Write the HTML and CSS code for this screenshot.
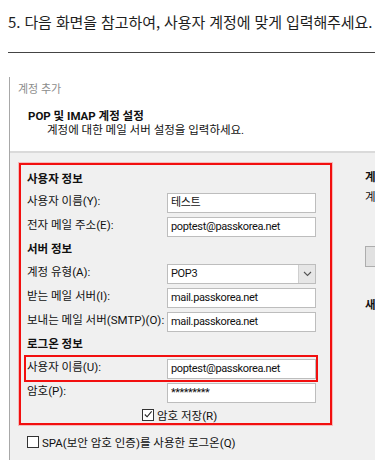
FILE: index.html
```html
<!DOCTYPE html>
<html lang="ko">
<head>
  <meta charset="UTF-8">
  <meta name="viewport" content="width=device-width, initial-scale=1.0">
  <title>POP 및 IMAP 계정 설정</title>
  <link rel="stylesheet" href="styles.css">
</head>
<body>
  <h1 class="question">5. 다음 화면을 참고하여, 사용자 계정에 맞게 입력해주세요.</h1>
  <hr class="rule">

  <div class="dialog">
    <div class="dlg-head">
      <div class="dlg-title">계정 추가</div>
      <div class="dlg-heading">POP 및 IMAP 계정 설정</div>
      <div class="dlg-sub">계정에 대한 메일 서버 설정을 입력하세요.</div>
    </div>

    <div class="dlg-body">
      <div class="left">
        <div class="redbox">
          <div class="sec first">사용자 정보</div>
          <div class="row">
            <span class="lbl">사용자 이름(Y):</span>
            <div class="field">테스트</div>
          </div>
          <div class="row">
            <span class="lbl">전자 메일 주소(E):</span>
            <div class="field">poptest@passkorea.net</div>
          </div>

          <div class="sec">서버 정보</div>
          <div class="row after-sec">
            <span class="lbl">계정 유형(A):</span>
            <div class="field select">
              <span>POP3</span>
              <span class="drop">
                <svg width="9" height="6" viewBox="0 0 9 6"><path d="M1 1l3.5 3.5L8 1" fill="none" stroke="#555" stroke-width="1.1"/></svg>
              </span>
            </div>
          </div>
          <div class="row">
            <span class="lbl">받는 메일 서버(I):</span>
            <div class="field">mail.passkorea.net</div>
          </div>
          <div class="row">
            <span class="lbl">보내는 메일 서버(SMTP)(O):</span>
            <div class="field">mail.passkorea.net</div>
          </div>

          <div class="sec">로그온 정보</div>
          <div class="highlight">
            <div class="row no-gap">
              <span class="lbl">사용자 이름(U):</span>
              <div class="field">poptest@passkorea.net</div>
            </div>
          </div>
          <div class="row pw">
            <span class="lbl">암호(P):</span>
            <div class="field stars">*********</div>
          </div>
          <label class="check save">
            <span class="box">
              <svg width="11" height="11" viewBox="0 0 11 11"><path d="M2 5.5l2.5 2.5L9.5 2" fill="none" stroke="#222" stroke-width="1.2"/></svg>
            </span>
            암호 저장(R)
          </label>
        </div>

        <label class="check spa">
          <span class="box"></span>
          SPA(보안 암호 인증)를 사용한 로그온(Q)
        </label>
      </div>

      <div class="right">
        <div class="r-title">계정 설정 테스트</div>
        <div class="r-text">계정 설정을 테스트하려면 아래 단추를 클릭하세요.</div>
        <div class="r-btn">계정 설정 테스트(T) ...</div>
        <div class="r-title r-next">새 메일 배달 위치:</div>
      </div>
    </div>
  </div>
</body>
</html>
```

FILE: styles.css
```css
html, body {
  overflow: hidden;
}
body {
  margin: 0;
  width: 375px;
  height: 460px;
  background: #fff;
  font-family: 'Noto Sans CJK KR', 'Noto Sans', sans-serif;
  color: #222;
}
.question {
  margin: 12px 0 0 8px;
  font-size: 15px;
  font-weight: 400;
  line-height: 20px;
  letter-spacing: -0.1px;
  white-space: nowrap;
  color: #1e1e1e;
}
.rule {
  margin: 20px 0 0 8px;
  border: none;
  border-top: 1px solid #444;
}

/* dialog screenshot */
.dialog {
  margin: 24px 0 0 9px;
  width: 500px;
  border-left: 1px solid #a8a8a8;
  font-family: Roboto, 'Noto Sans CJK KR', sans-serif;
  font-size: 11.5px;
  color: #111;
}
.dlg-head {
  padding: 5px 0 14px 8px;
  background: #fff;
  border-bottom: 2px solid #dadada;
}
.dlg-title {
  line-height: 16px;
  color: #8c8c8c;
  font-size: 11px;
}
.dlg-heading {
  margin: 12px 0 0 10px;
  font-weight: 700;
  line-height: 13px;
}
.dlg-sub {
  margin: 1px 0 0 29px;
  line-height: 13px;
}
.dlg-body {
  display: flex;
  align-items: flex-start;
  background: #f0f0f0;
  padding: 10px 0 20px 9px;
}
.left {
  width: 313px;
}
.redbox {
  border: 2px solid #f20f0f;
  box-shadow: 0 0 0 1px rgba(255, 90, 90, 0.35);
  padding: 0 14px 0 6px;
}
.sec {
  margin-top: 2px;
  height: 20px;
  line-height: 20px;
  font-weight: 700;
}
.sec.first {
  margin-top: 4px;
}
.row {
  display: grid;
  grid-template-columns: 140px 149px;
  margin-top: 4px;
  height: 20px;
}
.row.after-sec {
  margin-top: 5px;
}
.row.no-gap {
  margin-top: 0;
}
.row.pw {
  margin-top: 1px;
}
.lbl {
  line-height: 16px;
  white-space: nowrap;
}
.field {
  box-sizing: border-box;
  height: 20px;
  background: #fff;
  border: 1px solid #bdbdbd;
  padding: 0 3px;
  line-height: 18px;
  font-size: 11px;
  letter-spacing: -0.35px;
  white-space: nowrap;
  overflow: hidden;
}
.field.stars {
  letter-spacing: -0.5px;
}
.select {
  display: flex;
  justify-content: space-between;
  padding-right: 0;
}
.drop {
  width: 16px;
  height: 18px;
  background: #e6e6e6;
  border-left: 1px solid #cfcfcf;
  display: flex;
  align-items: center;
  justify-content: center;
}
.highlight {
  margin: 1px -2px 0 -3px;
  border: 2px solid #f20f0f;
  padding: 2px 0 1px 1px;
}

.check {
  display: flex;
  align-items: center;
  height: 17px;
  white-space: nowrap;
}
.check .box {
  box-sizing: border-box;
  width: 12px;
  height: 12px;
  margin-right: 3px;
  border: 1px solid #333;
  background: #fff;
  display: flex;
  align-items: center;
  justify-content: center;
}
.check.save {
  margin-top: 3px;
  padding-left: 115px;
}
.check.spa {
  margin-top: 8px;
  padding-left: 8px;
}

.right {
  margin-left: 33px;
  white-space: nowrap;
}
.r-title {
  margin-top: 6px;
  line-height: 16px;
  font-weight: 700;
}
.r-text {
  margin-top: 4px;
  line-height: 16px;
}
.r-btn {
  box-sizing: border-box;
  margin-top: 41px;
  height: 21px;
  width: 160px;
  border: 1px solid #adadad;
  background: #e1e1e1;
  line-height: 19px;
  padding-left: 12px;
  color: #e1e1e1;
}
.r-title.r-next {
  margin-top: 30px;
}
```
